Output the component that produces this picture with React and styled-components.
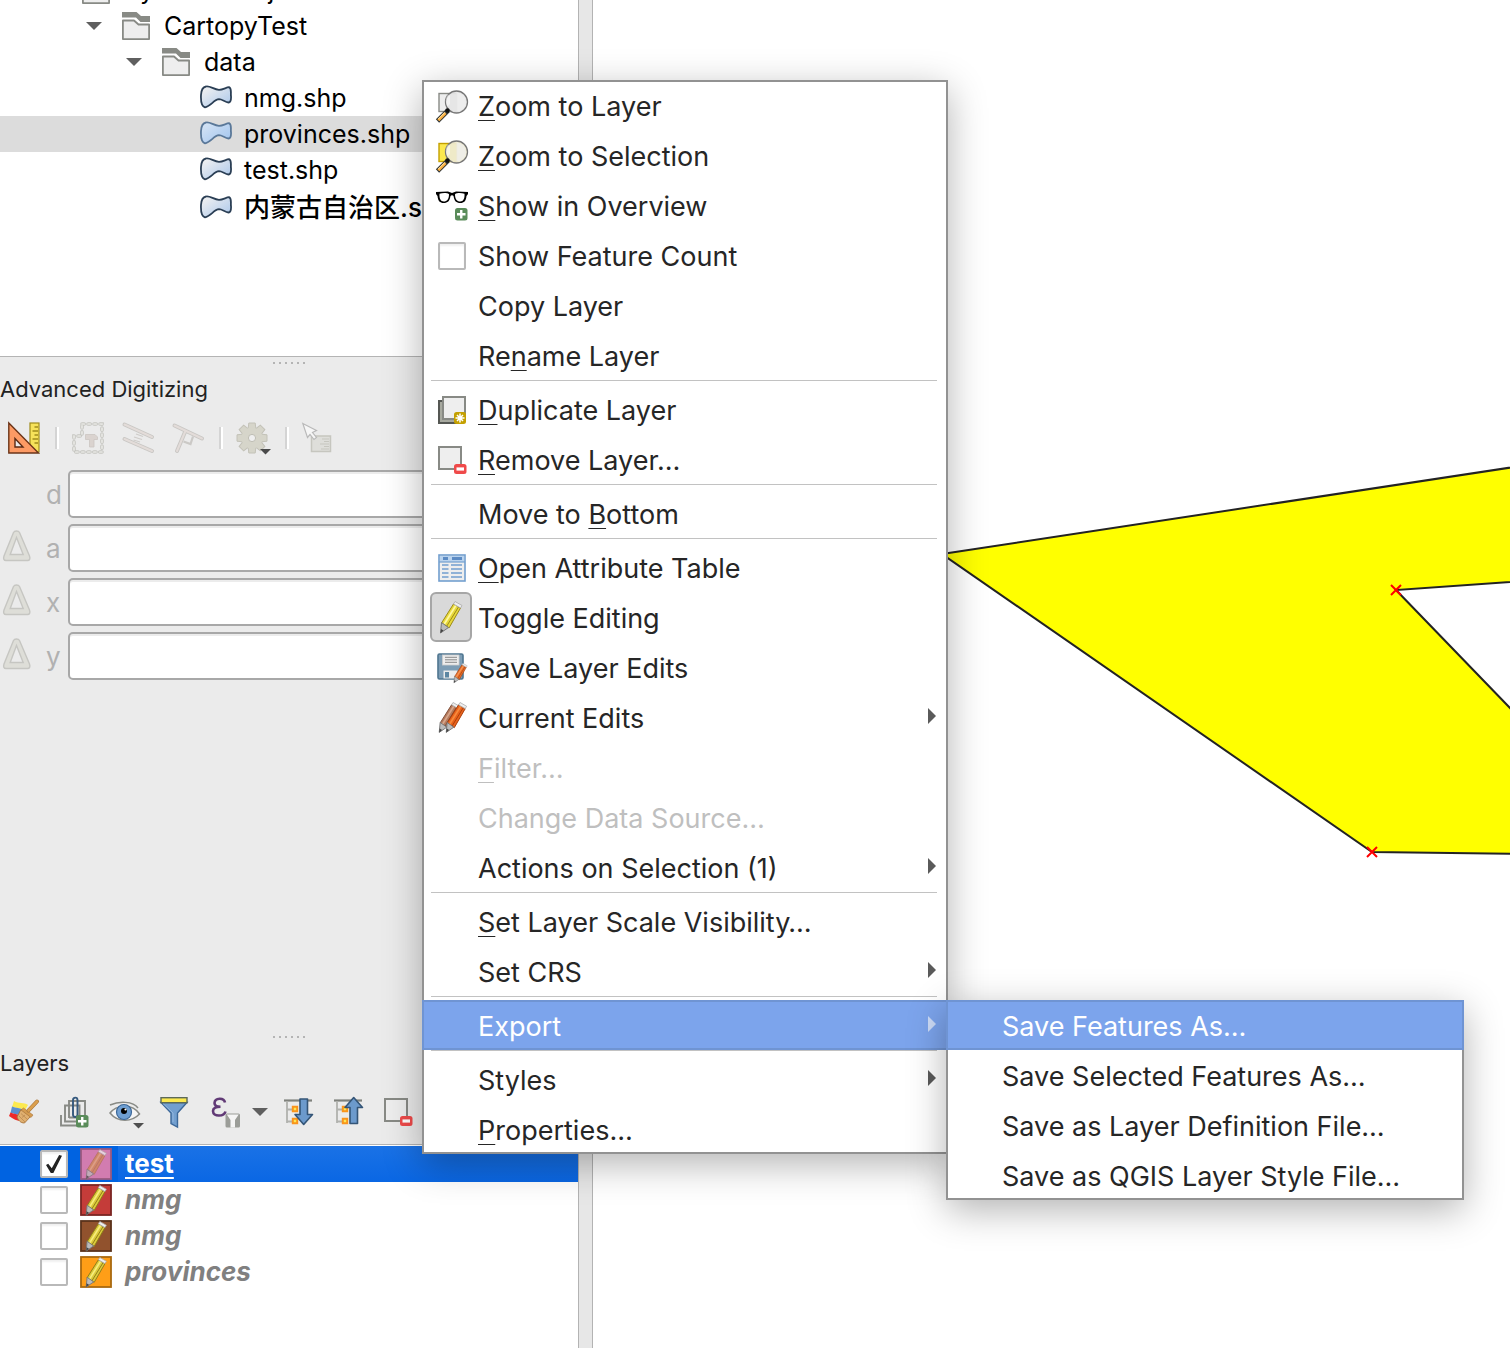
import React from "react";
import styled, { createGlobalStyle, css } from "styled-components";

const GlobalStyle = createGlobalStyle`
  * { box-sizing: border-box; }
  html, body { margin: 0; padding: 0; }
  body {
    background: #fff;
    font-family: Inter, "Noto Sans CJK SC", sans-serif;
    font-size: 26px;
    color: #000;
    overflow: hidden;
  }
  button, input { font: inherit; color: inherit; margin: 0; }
`;

/* ---------- window frame ---------- */

const Window = styled.div`
  position: relative;
  display: grid;
  grid-template-columns: 578px 15px minmax(0, 1fr);
  min-height: 100vh;
  overflow: hidden;
`;

const Dock = styled.aside`
  display: grid;
  grid-template-rows: 357px 674px 1fr;
  min-width: 0;
  background: #ebebeb;
`;

const Splitter = styled.div`
  background: #e7e7e7;
  border: solid #b3b3b3;
  border-width: 0 1px;
`;

const Canvas = styled.main`
  min-width: 0;
  background: #fff;
  overflow: hidden;
`;

const CanvasDrawing = styled.svg`
  display: block;
  width: 100%;
  height: 100%;
`;

/* ---------- browser tree ---------- */

const Browser = styled.section`
  display: flex;
  flex-direction: column;
  justify-content: flex-start;
  background: #fff;
  border-bottom: 1px solid #b4b4b4;
  overflow: hidden;
`;

const Tree = styled.ul`
  list-style: none;
  margin: -28px 0 0;
  padding: 0;
`;

const TreeRow = styled.li`
  display: flex;
  align-items: center;
  gap: ${(p) => (p.$folder ? 14 : 12)}px;
  height: ${(p) => (p.$cjk ? 40 : 36)}px;
  padding-left: ${(p) => p.$indent}px;
  background: ${(p) => (p.$selected ? "#dcdcdc" : "transparent")};
  font-size: ${(p) => (p.$cjk ? 26 : 25)}px;
  font-weight: ${(p) => (p.$cjk ? 500 : 400)};
  line-height: 36px;
  white-space: nowrap;
  svg { flex: none; }
`;

const TreeToggle = styled.span`
  display: flex;
  margin-right: 6px;
`;

/* ---------- dock panels ---------- */

const Panel = styled.section`
  display: flex;
  flex-direction: column;
  min-width: 0;
`;

const Handle = styled.div`
  display: flex;
  justify-content: center;
  gap: 4px;
  height: 12px;
  padding-top: 5px;
`;

const Dot = styled.span`
  width: 2px;
  height: 2px;
  background: #b4b4b4;
`;

const PanelTitle = styled.h2`
  margin: 0;
  height: 40px;
  line-height: 40px;
  font-size: 22px;
  font-weight: 400;
  color: #222;
`;

const Toolbar = styled.div`
  display: flex;
  align-items: center;
  gap: 18px;
  height: 58px;
  margin-bottom: 3px;
  padding-left: 8px;
`;

const ToolGroup = styled.div`
  display: flex;
  align-items: center;
  gap: 12px;
  margin-right: -4px;
`;

const ToolButton = styled.button`
  flex: none;
  display: grid;
  place-items: center;
  width: ${(p) => p.$w || 32}px;
  height: 32px;
  padding: 0;
  border: 0;
  background: none;
  svg { display: block; overflow: visible; }
`;

const ToolSeparator = styled.span`
  width: 4px;
  height: 22px;
  margin: 0 -5px 0 -3px;
  border-left: 2px solid #d4d4d4;
  border-right: 2px solid #fff;
`;

const Form = styled.form`
  display: flex;
  flex-direction: column;
  gap: 6px;
`;

const Field = styled.div`
  display: grid;
  grid-template-columns: 32px 24px minmax(0, 1fr);
  column-gap: 6px;
  align-items: center;
`;

const FieldIcon = styled.span`
  display: block;
  height: 32px;
  svg { display: block; overflow: visible; }
`;

const FieldLabel = styled.label`
  padding-left: 8px;
  color: #b1b1b1;
`;

const FieldInput = styled.input`
  width: 100%;
  height: 48px;
  border: 2px solid #a8a8a8;
  border-radius: 5px;
  background: #fff;
  box-shadow: inset 0 2px 0 #ececec;
`;

/* ---------- layer list ---------- */

const LayerList = styled.ul`
  flex: 1;
  list-style: none;
  margin: 0;
  padding: 1px 0 0;
  border-top: 1px solid #b4b4b4;
  background: #fff;
`;

const LayerRow = styled.li`
  display: flex;
  align-items: center;
  height: 36px;
  padding-left: 40px;
  gap: 12px;
  background: ${(p) => (p.$selected ? "#0063e1" : "transparent")};
`;

const boxStyle = css`
  appearance: none;
  flex: none;
  display: grid;
  place-items: center;
  width: 28px;
  height: 28px;
  border: 2px solid #b9b9b9;
  border-radius: 2px;
  background: #fff;
  box-shadow: inset 0 2px 2px #f0f0f0;
`;

const CheckBox = styled.input`
  ${boxStyle}
  &:checked::after {
    content: "";
    width: 16px;
    height: 18px;
    background: #232323;
    clip-path: polygon(0 55%, 14% 48%, 36% 74%, 82% 0, 100% 4%, 46% 100%, 30% 100%);
  }
`;

const LayerName = styled.label`
  flex: 1;
  margin-left: -6px;
  padding-left: 7px;
  line-height: 36px;
  font-weight: 700;
  color: ${(p) => (p.$active ? "#fff" : "#808080")};
  font-style: ${(p) => (p.$active ? "normal" : "italic")};
  background: ${(p) => (p.$active ? "linear-gradient(#1a72e6, #0a67e4)" : "none")};
  text-decoration: ${(p) => (p.$active ? "underline 2px" : "none")};
  text-underline-offset: 4px;
`;

/* ---------- context menu ---------- */

const MenuPanel = styled.div`
  background: #fff;
  box-shadow: inset 0 0 0 2px #929292, 0 10px 36px rgba(0, 0, 0, 0.3);
`;

const ContextMenu = styled(MenuPanel)`
  position: absolute;
  left: 422px;
  top: 80px;
  width: 526px;
`;

const SubMenu = styled(MenuPanel)`
  position: absolute;
  left: 524px;
  top: 0;
  width: 518px;
`;

const SubMenuHost = styled.div`
  position: relative;
`;

const MenuItem = styled.button`
  display: flex;
  align-items: center;
  gap: 6px;
  width: 100%;
  height: 50px;
  padding: 0 12px 0 8px;
  border: 0;
  background: ${(p) => (p.$active ? "#7ca4ec" : "transparent")};
  box-shadow: ${(p) => (p.$active ? "inset 0 0 0 2px #6f94d3" : "none")};
  color: ${(p) => (p.$active ? "#fff" : "#262626")};
  font-size: 27px;
  line-height: 32px;
  text-align: left;
  white-space: nowrap;
  &:disabled { color: #bfbfbf; }
  u {
    text-decoration: underline 1px;
    text-underline-offset: 4px;
    text-decoration-skip-ink: none;
  }
`;

const IconSlot = styled.span`
  flex: none;
  display: grid;
  place-items: center;
  width: 42px;
  height: 50px;
  padding: ${(p) => (p.$pressed ? "0" : "2px 0 0 2px")};
  border: ${(p) => (p.$pressed ? "2px solid #a6a6a6" : "0")};
  border-radius: 6px;
  background: ${(p) => (p.$pressed ? "#d9d9d9" : "transparent")};
  svg { display: block; overflow: visible; }
`;

const MenuText = styled.span`
  flex: 1;
  padding-top: 4px;
`;

const MenuRule = styled.hr`
  height: 4px;
  margin: 0 11px 0 9px;
  border: 0;
  border-top: 1px solid #c2c2c2;
`;

/* ---------- icons ---------- */

const Svg = ({ w = 32, h = 32, children }) => (
  <svg width={w} height={h} viewBox={`0 0 ${w} ${h}`} fill="none" aria-hidden="true">
    {children}
  </svg>
);

const TreeArrow = () => (
  <Svg w={16} h={8}>
    <path d="M0 0H16L8 8Z" fill="#5f5f5f" />
  </Svg>
);

const Folder = () => (
  <Svg w={28} h={28}>
    <path d="M0 0H14.500L19 4H28V10H18.500L14 5.500H0Z" fill="#888a85" />
    <path d="M1 8.500H12L16.500 12.500H27V27H1Z" fill="#eee" stroke="#fff" strokeWidth="4" />
    <path d="M0.900 8.500H12L16.500 12.500H27.100V27.100H0.900Z" fill="#eee" stroke="#888a85" strokeWidth="1.800" strokeLinejoin="round" />
  </Svg>
);

const Shape = ({ selected }) => (
  <Svg w={32} h={26}>
    <defs>
      <linearGradient id={selected ? "shpB" : "shpA"} x1="0" y1="0" x2="1" y2="1">
        <stop offset="0" stopColor={selected ? "#d9e6f5" : "#f6f4f2"} />
        <stop offset="1" stopColor={selected ? "#9fc3ee" : "#a9c6ea"} />
      </linearGradient>
    </defs>
    <path
      d="M6 1.500C10 0.500 14 4.800 19 4.800C23 4.800 26 2.500 29 2.200C32 3.500 30.500 8 31 11C31.200 14 31 17.200 28.500 17.500C25 17 22 14.200 19 14.200C14 14.500 10.500 21.500 5 22.300C0.500 21 0.800 14 1 10C1.200 6 2 2.200 6 1.500Z"
      fill={`url(#${selected ? "shpB" : "shpA"})`}
      stroke={selected ? "#5a7899" : "#2b3f55"}
      strokeWidth="1.800"
    />
  </Svg>
);

const ZoomIcon = ({ yellow }) => (
  <Svg>
    <rect x="3" y="3.500" width="18" height="18" fill={yellow ? "#fce94f" : "#eee"} stroke={yellow ? "#c4a000" : "#888a85"} strokeWidth="1.400" />
    <circle cx="20.500" cy="12" r="11" fill={yellow ? "#eeead0" : "#e6e6e6"} fillOpacity="0.940" stroke="#777" strokeWidth="1.300" />
    <path d="M20.500 2.500A9.500 9.500 0 0 1 20.500 21.500Z" fill="#f0f0f0" opacity="0.700" />
    <path d="M12 4.500A10 10 0 0 0 11.500 16.500L14 14V6Z" fill="#fff" opacity="0.500" />
    <path d="M1.500 31L12 20.500" stroke="#2e3436" strokeWidth="4.600" />
    <path d="M2.300 30.200L9.500 23" stroke="#fcaf3e" strokeWidth="2.800" />
    <path d="M2.300 29L9 22.300" stroke="#fff2c0" strokeWidth="0.900" />
    <circle cx="11.500" cy="20.500" r="2.200" fill="#111" />
  </Svg>
);

const Badge = ({ x, y, minus }) => (
  <g transform={`translate(${x} ${y})`}>
    <rect width="12.500" height={minus ? 10 : 12.500} rx="2.500" fill={minus ? "#ef4a4a" : "#5a8c5a"} />
    {minus ? (
      <path d="M2.500 5H10" stroke="#fff" strokeWidth="3.200" />
    ) : (
      <path d="M6.250 2V10.500M2 6.250H10.500" stroke="#fff" strokeWidth="2.400" />
    )}
  </g>
);

const Glasses = () => (
  <Svg>
    <path d="M0 2L12 1.500L16 3L20 1.500L32 2V4L30.500 6C30 11 28 13 24.500 13C20 13 18.500 11 17.500 6C17 5 15 5 14.500 6C13.500 11 12 13 7.500 13C4 13 2 11 1.500 6L0 4Z" fill="#000" />
    <path d="M3.500 3.800C7 2.800 11 2.800 13 4.200C13 9 11 11.500 7.800 11.500C4.500 11.500 3.200 8.500 3.500 3.800ZM28.500 3.800C25 2.800 21 2.800 19 4.200C19 9 21 11.500 24.200 11.500C27.500 11.500 28.800 8.500 28.500 3.800Z" fill="#fff" />
    <Badge x={19} y={18} />
  </Svg>
);

const Duplicate = () => (
  <Svg>
    <rect x="3" y="7" width="22" height="22" fill="#a7a99f" stroke="#555753" strokeWidth="2" />
    <rect x="7" y="3" width="22" height="22" fill="#eee" stroke="#888a85" strokeWidth="2" />
    <rect x="18" y="18" width="12" height="12" rx="2.500" fill="#c4a000" />
    <path d="M24 19.500V28.500M19.500 24H28.500M21 21L27 27M27 21L21 27" stroke="#fff" strokeWidth="1.500" />
  </Svg>
);

const Remove = () => (
  <Svg>
    <rect x="3" y="3" width="22" height="22" fill="#eee" stroke="#888a85" strokeWidth="2" />
    <Badge x={18} y={20} minus />
  </Svg>
);

const TableIcon = () => (
  <Svg>
    <rect x="3" y="3" width="26" height="26" fill="#eee" stroke="#729fcf" strokeWidth="1.600" />
    <rect x="4" y="4" width="24" height="6" fill="#b9d3ee" />
    <path d="M7 6.500H12M16 6.500H26" stroke="#5c8bc4" strokeWidth="3" />
    <path d="M3 10H29" stroke="#729fcf" strokeWidth="1.200" />
    <path d="M6 13H12.500M15 13H26M6 17H12.500M15 17H26M6 21H12.500M15 21H26M6 25H12.500M15 25H26" stroke="#729fcf" strokeWidth="1.300" />
  </Svg>
);

const PencilShape = ({ body = "#e8d93a", light = "#fff8a0", dark = "#9b8a1a" }) => (
  <g>
    <path d="M18.500 3L25.500 7L14 27L6.500 22Z" fill={body} stroke={dark} strokeWidth="1" />
    <path d="M20.800 4.500L9 23.500" stroke={light} strokeWidth="1.800" />
    <path d="M23.500 6L11.500 25.500" stroke={dark} strokeWidth="1" />
    <path d="M18.500 3L20 0.500L27 4.500L25.500 7Z" fill="#eee" stroke="#aaa" strokeWidth="0.800" />
    <path d="M6.500 21.500L13.500 26.500L5.500 32Z" fill="#bbb" stroke="#777" strokeWidth="1" />
    <path d="M6 28L8.500 29.500L5.500 32Z" fill="#444" />
  </g>
);

const Pencil = () => (
  <Svg>
    <PencilShape />
  </Svg>
);

const SaveEdits = () => (
  <Svg>
    <rect x="2" y="2" width="25" height="25" rx="1.500" fill="#7d9db5" stroke="#4f7690" strokeWidth="1.600" />
    <rect x="6.500" y="3" width="16.500" height="10" fill="#ededed" stroke="#ccc" strokeWidth="0.800" />
    <path d="M9 5.300H21M9 7.800H21M9 10.300H21" stroke="#888" strokeWidth="1" />
    <rect x="7.500" y="18.500" width="14" height="8" fill="#ececec" />
    <rect x="9" y="20" width="4" height="5.500" fill="#5c86a2" />
    <g transform="translate(14.500 11) scale(.62)">
      <PencilShape body="#e8702a" light="#f79a5c" dark="#a63c0a" />
    </g>
  </Svg>
);

const TwoPencils = () => (
  <Svg>
    <g transform="translate(-2 0) scale(.95)">
      <PencilShape body="#b57a5c" light="#d6a68c" dark="#7c4a34" />
    </g>
    <g transform="translate(5 0) scale(.95)">
      <PencilShape body="#e8621c" light="#f78a3c" dark="#a63c0a" />
    </g>
  </Svg>
);

const MenuArrow = ({ color }) => (
  <Svg w={8} h={18}>
    <path d="M0 0L8 8L0 16Z" fill={color} />
  </Svg>
);

const SetSquare = () => (
  <Svg>
    <rect x="22" y="1" width="9" height="29" fill="#f6e25a" stroke="#a08c1c" strokeWidth="1.200" />
    <path d="M26.500 5H30M24.500 9H30M26.500 13H30M24.500 17H30M26.500 21H30" stroke="#a08c1c" strokeWidth="1.400" />
    <path d="M0.800 1V31H30.500Z" fill="#fc9a64" stroke="#6b3418" strokeWidth="1.400" />
    <path d="M7 16.500V25H15Z" fill="#ebebeb" stroke="#5a2a14" strokeWidth="1.400" />
  </Svg>
);

const Construction = () => (
  <Svg>
    <path d="M10 2H30V30H2V14H10Z" stroke="#c6c6c1" strokeWidth="3.600" strokeDasharray="2.200 3.800" strokeLinecap="round" />
    <path d="M10 2H30V30H2V14H10Z" stroke="#e8e8e4" strokeWidth="1.700" strokeDasharray="2.200 3.800" strokeLinecap="round" />
    <path d="M13.500 12.500H23L25.500 15V17.500H22V25H17.500V17.500H13.500Z" fill="#dad3cf" stroke="#cbc5c1" strokeWidth="0.800" />
  </Svg>
);

const Parallel = () => (
  <Svg>
    <path d="M2.500 2.500L30 15M2.500 17L30 29" stroke="#c9c7c4" strokeWidth="4" strokeLinecap="round" />
    <path d="M2.500 2.500L30 15M2.500 17L30 29" stroke="#e3dcd9" strokeWidth="2" strokeLinecap="round" />
    <path d="M14 12L21 14.500M12 15L20 17.500M11.500 18L18 20" stroke="#cfccc9" strokeWidth="1.300" />
  </Svg>
);

const Perpendicular = () => (
  <Svg>
    <path d="M2.500 3.500L30 16.500M13 10L5 29" stroke="#c9c7c4" strokeWidth="4" strokeLinecap="round" />
    <path d="M2.500 3.500L30 16.500M13 10L5 29" stroke="#e3dcd9" strokeWidth="2" strokeLinecap="round" />
    <path d="M11.500 19.500L18.500 22L21 14.500" stroke="#cbc9c6" strokeWidth="2.200" />
  </Svg>
);

const Gear = () => (
  <Svg w={34}>
    <g fill="#d6d5ca" stroke="#c3c2b8" strokeWidth="1">
      {[0, 45, 90, 135, 180, 225, 270, 315].map((a) => (
        <path key={a} d="M12 8L12.800 1H19.200L20 8Z" transform={`rotate(${a} 16 16)`} />
      ))}
      <circle cx="16" cy="16" r="10.500" stroke="none" />
    </g>
    <circle cx="16" cy="16" r="3.600" fill="#efefef" stroke="#bfbeb4" strokeWidth="1" />
    <path d="M24 27H35L29.500 32.500Z" fill="#4a4a4a" />
  </Svg>
);

const CursorNote = () => (
  <Svg>
    <rect x="9.500" y="14" width="19" height="15.500" fill="#dededa" stroke="#c6c6bf" strokeWidth="1.500" />
    <path d="M20 17H27M22 19.500H27M18 22H27M22 24.500H27M19 27H27" stroke="#c6c6bf" strokeWidth="1" />
    <path d="M0.800 1.500L14.500 8.500L10.500 10.500L14.500 15.500L12 17.500L8 12.500L5.500 15.500Z" fill="#f6f6f6" stroke="#b9b9b9" strokeWidth="1.200" />
  </Svg>
);

const Delta = () => (
  <Svg>
    <path d="M13.500 3.500C14.500 1.500 18.500 1.500 19.500 3.500L29.500 27C30.500 30 29.500 31.500 27.500 31.500H6C4 31.500 3 30 4 27ZM16.500 8.500L10.200 25.500H23.200Z" transform="translate(0 -3)" fill="#deded8" stroke="#c6c6c2" strokeWidth="1.400" fillRule="evenodd" />
  </Svg>
);

const Brush = () => (
  <Svg>
    <path d="M6 5C11 8 16 6 20 9L17 14C12 12 8 12 4 11Z" fill="#fce94f" />
    <path d="M4 10.500C8 12 12 12 16 14L13 20C9 18 6 18 2.500 17Z" fill="#5b8fd0" />
    <path d="M2.500 16.500C6 18 9 18 13 20L14 25C9 25 5 23 1 20Z" fill="#ef2929" />
    <path d="M13 13.500L22.500 20.500L16.500 27C12.500 27 10.500 24.500 9 21Z" fill="#e0b070" stroke="#a8743a" strokeWidth="0.900" />
    <path d="M11 20L17 26M13 17.500L19.500 23.500M14 21.500L17 19" stroke="#b5824a" strokeWidth="0.700" />
    <path d="M15.500 12L25 19L23 21.500L13 14Z" fill="#d59c50" stroke="#a8743a" strokeWidth="0.600" />
    <path d="M20.500 14.500L29 5.500" stroke="#a8743a" strokeWidth="4" strokeLinecap="round" />
    <path d="M20.500 14.500L29 5.500" stroke="#dba04e" strokeWidth="2.600" strokeLinecap="round" />
  </Svg>
);

const AddGroup = () => (
  <Svg>
    <path d="M3 19V29.500H20M20 25.500H7V9.500H21.500V20" stroke="#888a85" strokeWidth="1.900" />
    <path d="M11 22V5H27V20M11 21.500H19" stroke="#888a85" strokeWidth="1.900" />
    <path d="M19.500 8V18.500C19.500 21.800 15 21.800 15 18.500V4C15 0.800 19.500 0.800 19.500 4V8" stroke="#35597e" strokeWidth="1.900" />
    <Badge x={18} y={19} />
  </Svg>
);

const Eye = () => (
  <Svg>
    <path d="M2 17C8 9 24 7 31.500 18C24 26 10 27 2 17Z" fill="#f5f5f5" stroke="#888a85" strokeWidth="1.500" />
    <path d="M2 9C11 5 25 5 30 12" stroke="#888a85" strokeWidth="1.500" />
    <circle cx="16" cy="16" r="7.500" fill="#6f9fd2" stroke="#3c6899" strokeWidth="1.200" />
    <circle cx="16" cy="15" r="3" fill="#000" />
    <circle cx="17.500" cy="13.500" r="1.100" fill="#fff" />
    <path d="M25 27H36L30.500 32.500Z" fill="#4f4f4f" />
  </Svg>
);

const Funnel = () => (
  <Svg>
    <path d="M3 6.500H29L19.500 17V31L13 27.500V17Z" fill="#729fcf" stroke="#3c6899" strokeWidth="1.400" />
    <path d="M5 7.500L15 17V26" stroke="#93b7df" strokeWidth="1" />
    <rect x="3" y="1.700" width="26" height="5" fill="#fce94f" stroke="#5d6a58" strokeWidth="1.400" />
  </Svg>
);

const EpsilonFilter = () => (
  <Svg>
    <path d="M17 6.500C16 1.500 7 1.500 6.500 7C6.500 10 9.500 10.800 12.500 10.800C8.500 10.800 5 12 5 15C5 21 16 21 17.500 15.500" stroke="#613a76" strokeWidth="2.600" />
    <rect x="17.500" y="17.500" width="14.500" height="14" rx="1.500" fill="#9b9d98" />
    <path d="M18.800 18.500H30.700L27 24V31.500H22.500V24Z" fill="#f5f5f5" />
  </Svg>
);

const TreeLines = ({ children }) => (
  <Svg>
    <g transform="translate(2 0)">
      <path d="M0 4.500H28" stroke="#7f817c" strokeWidth="2.200" />
      <path d="M3 5V27M3 13.500H8M3 25.500H8" stroke="#b1b2ae" strokeWidth="1.800" />
      <path d="M8.800 10.800H13.200V15.200H8.800ZM8.800 22.800H13.200V27.200H8.800Z" fill="#fce94f" stroke="#f9941c" strokeWidth="2" />
      {children}
    </g>
  </Svg>
);

const ExpandAll = () => (
  <TreeLines>
    <path d="M16 3H23.500V18.500H28.500L19.700 28.500L11 18.500H16Z" fill="#6c9acc" stroke="#345577" strokeWidth="1.600" strokeLinejoin="round" />
  </TreeLines>
);

const CollapseAll = () => (
  <TreeLines>
    <path d="M16 27.500H23.500V11.500H28.500L19.700 1.500L11 11.500H16Z" fill="#6c9acc" stroke="#345577" strokeWidth="1.600" strokeLinejoin="round" />
  </TreeLines>
);

const Swatch = ({ fill, edge, faded }) => (
  <Svg>
    <rect x="1" y="1" width="30" height="30" fill={fill} stroke={edge} strokeWidth="1.800" />
    <g transform="translate(1 1) scale(.94)" opacity={faded ? 0.75 : 1}>
      <PencilShape body={faded ? "#d08a50" : "#dccb3c"} light={faded ? "#e0a878" : "#f7ee7c"} dark={faded ? "#b07050" : "#8a7a18"} />
    </g>
  </Svg>
);

/* ---------- content ---------- */

const treeRows = [
  { name: "PycharmProjects", kind: "folder", indent: 46 },
  { name: "CartopyTest", kind: "folder", indent: 86 },
  { name: "data", kind: "folder", indent: 126 },
  { name: "nmg.shp", kind: "shape", indent: 200 },
  { name: "provinces.shp", kind: "shape", indent: 200, selected: true },
  { name: "test.shp", kind: "shape", indent: 200 },
  { name: "内蒙古自治区.shp", kind: "shape", indent: 200, cjk: true },
];

const fields = [
  { id: "d", label: "d" },
  { id: "a", label: "a", delta: true },
  { id: "x", label: "x", delta: true },
  { id: "y", label: "y", delta: true },
];

const layers = [
  { name: "test", fill: "#d27cb0", edge: "#99597f", active: true },
  { name: "nmg", fill: "#c43c39", edge: "#7a2523" },
  { name: "nmg", fill: "#91522d", edge: "#5a321b" },
  { name: "provinces", fill: "#ff9e17", edge: "#a9690f" },
];

const Item = ({ icon, pressed, arrow, active, disabled, children }) => (
  <MenuItem type="button" role="menuitem" $active={active} disabled={disabled}>
    <IconSlot $pressed={pressed}>{icon}</IconSlot>
    <MenuText>{children}</MenuText>
    {arrow && <MenuArrow color={active ? "#cddcf7" : "#5a5a5a"} />}
  </MenuItem>
);

const DockHandle = () => (
  <Handle>
    {[0, 1, 2, 3, 4, 5].map((n) => (
      <Dot key={n} />
    ))}
  </Handle>
);

const Tool = ({ label, w, children }) => (
  <ToolButton type="button" aria-label={label} $w={w}>
    {children}
  </ToolButton>
);

const VertexMarker = ({ x, y }) => (
  <path d={`M${x - 5} ${y - 5}L${x + 5} ${y + 5}M${x + 5} ${y - 5}L${x - 5} ${y + 5}`} stroke="#f00" strokeWidth="2" />
);

export default function App() {
  return (
    <>
      <GlobalStyle />
      <Window>
        <Dock>
          <Browser>
            <Tree>
              {treeRows.map((r) => (
                <TreeRow
                  key={r.name}
                  $indent={r.indent}
                  $folder={r.kind === "folder"}
                  $selected={r.selected}
                  $cjk={r.cjk}
                >
                  {r.kind === "folder" ? (
                    <>
                      <TreeToggle><TreeArrow /></TreeToggle>
                      <Folder />
                    </>
                  ) : (
                    <Shape selected={r.selected} />
                  )}
                  <span>{r.name}</span>
                </TreeRow>
              ))}
            </Tree>
          </Browser>

          <Panel>
            <DockHandle />
            <PanelTitle>Advanced Digitizing</PanelTitle>
            <Toolbar>
              <Tool label="Enable advanced digitizing tools"><SetSquare /></Tool>
              <ToolSeparator />
              <Tool label="Construction mode"><Construction /></Tool>
              <Tool label="Parallel"><Parallel /></Tool>
              <Tool label="Perpendicular"><Perpendicular /></Tool>
              <ToolSeparator />
              <Tool label="Snapping settings" w={34}><Gear /></Tool>
              <ToolSeparator />
              <Tool label="Toggle floater"><CursorNote /></Tool>
            </Toolbar>
            <Form>
              {fields.map((f) => (
                <Field key={f.id}>
                  <FieldIcon>{f.delta && <Delta />}</FieldIcon>
                  <FieldLabel htmlFor={`field-${f.id}`}>{f.label}</FieldLabel>
                  <FieldInput id={`field-${f.id}`} type="text" />
                </Field>
              ))}
            </Form>
          </Panel>

          <Panel>
            <DockHandle />
            <PanelTitle>Layers</PanelTitle>
            <Toolbar>
              <Tool label="Open layer styling"><Brush /></Tool>
              <Tool label="Add group"><AddGroup /></Tool>
              <Tool label="Manage map themes"><Eye /></Tool>
              <Tool label="Filter legend"><Funnel /></Tool>
              <ToolGroup>
                <Tool label="Filter by expression"><EpsilonFilter /></Tool>
                <Tool label="Filter options" w={16}>
                  <TreeArrow />
                </Tool>
              </ToolGroup>
              <Tool label="Expand all"><ExpandAll /></Tool>
              <Tool label="Collapse all"><CollapseAll /></Tool>
              <Tool label="Remove layer"><Remove /></Tool>
            </Toolbar>
            <LayerList>
              {layers.map((l, i) => (
                <LayerRow key={i} $selected={l.active}>
                  <CheckBox type="checkbox" id={`layer-${i}`} defaultChecked={l.active} />
                  <Swatch fill={l.fill} edge={l.edge} faded={l.active} />
                  <LayerName htmlFor={`layer-${i}`} $active={l.active}>{l.name}</LayerName>
                </LayerRow>
              ))}
            </LayerList>
          </Panel>
        </Dock>

        <Splitter />

        <Canvas>
          <CanvasDrawing aria-label="Map canvas">
            <path
              d="M349 554L1000 455V576L803 590L1000 794V855L779 852Z"
              fill="#ff0"
              stroke="#232323"
              strokeWidth="2"
            />
            <VertexMarker x={803} y={590} />
            <VertexMarker x={779} y={852} />
          </CanvasDrawing>
        </Canvas>

        <ContextMenu role="menu">
          <Item icon={<ZoomIcon />}><u>Z</u>oom to Layer</Item>
          <Item icon={<ZoomIcon yellow />}><u>Z</u>oom to Selection</Item>
          <Item icon={<Glasses />}><u>S</u>how in Overview</Item>
          <MenuItem as="label">
            <IconSlot><CheckBox type="checkbox" /></IconSlot>
            <MenuText>Show Feature Count</MenuText>
          </MenuItem>
          <Item>Copy Layer</Item>
          <Item>Re<u>n</u>ame Layer</Item>
          <MenuRule />
          <Item icon={<Duplicate />}><u>D</u>uplicate Layer</Item>
          <Item icon={<Remove />}><u>R</u>emove Layer…</Item>
          <MenuRule />
          <Item>Move to <u>B</u>ottom</Item>
          <MenuRule />
          <Item icon={<TableIcon />}><u>O</u>pen Attribute Table</Item>
          <Item icon={<Pencil />} pressed>Toggle Editing</Item>
          <Item icon={<SaveEdits />}>Save Layer Edits</Item>
          <Item icon={<TwoPencils />} arrow>Current Edits</Item>
          <Item disabled><u>F</u>ilter…</Item>
          <Item disabled>Change Data Source…</Item>
          <Item arrow>Actions on Selection (1)</Item>
          <MenuRule />
          <Item><u>S</u>et Layer Scale Visibility…</Item>
          <Item arrow>Set CRS</Item>
          <MenuRule />
          <SubMenuHost>
            <Item active arrow>Export</Item>
            <SubMenu role="menu">
              <Item active>Save Features As…</Item>
              <Item>Save Selected Features As…</Item>
              <Item>Save as Layer Definition File…</Item>
              <Item>Save as QGIS Layer Style File…</Item>
            </SubMenu>
          </SubMenuHost>
          <MenuRule />
          <Item arrow>Styles</Item>
          <Item><u>P</u>roperties…</Item>
        </ContextMenu>
      </Window>
    </>
  );
}
